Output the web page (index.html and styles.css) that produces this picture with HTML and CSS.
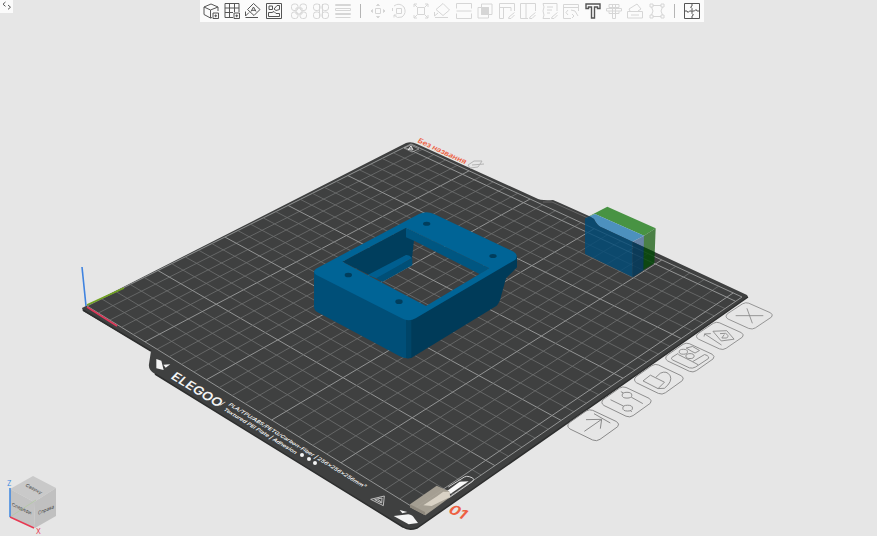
FILE: index.html
```
<!doctype html>
<html lang="ru">
  <head>
    <meta charset="utf-8" />
    <meta name="viewport" content="width=device-width, initial-scale=1" />
    <title>Без названия</title>
    <link rel="stylesheet" href="styles.css">
  </head>
  <body>
    <main class="viewport">
      <svg class="scene" viewBox="0 0 877 536" preserveAspectRatio="xMidYMid slice">
        <defs>
          <path id="plate" d="M82 308L406 143Q411 141 417 144L536 198Q541 201 553 200L560 203L589 216L594 219Q597 226 603 228L747 295L748 297L417 528Q409 531 403 527L155 374Q148 370 149 364L151 351L83 311Z" />
          <clipPath id="plate-clip"><use href="#plate" /></clipPath>
          <path id="tile" d="M-72 -7L-22 -42Q-12 -48 -2 -44L70 -10Q80 -3 73 5L20 43Q10 50 -2 45L-70 12Q-82 4 -72 -7Z" />
        </defs>

        <!-- wipe tower, part above the plate -->
        <svg x="560" y="190" width="200" height="120" viewBox="0 0 600 360">
          <path fill="#489343" d="M75 85L142 50L287 115L252 137L105 72Z" />
          <path fill="#4d91be" d="M75 85L105 72L252 137L218 155L218 262L75 192Z" />
          <path fill="#6783a6" d="M218 155L252 137V240L218 262Z" />
          <path fill="#4b8046" d="M252 137L287 115L283 220L250 240Z" />
        </svg>

        <use href="#plate" fill="#3f4040" />
        <path class="rim" d="M83 310L151 351M155 374L403 527Q409 531 417 528L748 297" />
        <g id="grid"></g>
        <path class="rim-light" d="M543 202H552L588 218" />

        <!-- wipe tower, part in front of the plate -->
        <g clip-path="url(#plate-clip)">
          <svg x="560" y="190" width="200" height="120" viewBox="0 0 600 360">
            <path fill="#004b78" opacity=".8" d="M75 85L105 72L252 137L218 155V262L75 192Z" />
            <path fill="#043a5c" opacity=".86" d="M218 155L252 137V240L218 262Z" />
            <path fill="#06480a" opacity=".86" d="M252 137L287 115L283 220L250 240Z" />
          </svg>
        </g>

        <!-- origin axes -->
        <path class="axis axis-z" d="M86 306L82 267" />
        <path class="axis axis-y" d="M87 305L124 288" />
        <path class="axis axis-x" d="M87 307L117 326" />

        <!-- plate print -->
        <svg x="70" y="255" width="150" height="150" viewBox="0 0 450 450">
          <path fill="#f4f4f4" d="M259 312L274 317L281 345L259 340ZM280 329L301 328L287 338Z" />
        </svg>
        <g class="print">
          <text class="brand" transform="matrix(.85 .52 -.6 .65 170 378)">ELEGOO</text>
          <text class="spec" transform="matrix(.85 .52 -.75 .47 220 404)">|</text>
          <text class="spec" transform="matrix(.85 .52 -.7 .52 228 405)">PLA/TPU/ABS/PETG/Carbon-Fiber | 256×256×256mm³</text>
          <text class="spec" transform="matrix(.85 .52 -.7 .52 223 410)">Textured PEI Plate | Adhesion</text>
          <circle cx="302" cy="455" r="2" />
          <circle cx="309" cy="459" r="2" />
          <circle cx="315" cy="463" r="2" />
        </g>

        <!-- plate corner badge -->
        <path fill="none" stroke="#b5b5b5" stroke-width=".7" d="M404 148L411 145L419 149L412 152Z" />
        <path fill="none" stroke="#f2f2f2" d="M408 150L411 146L413 150M409 149H412" />

        <!-- front corner marks and nozzle wipe area -->
        <svg x="360" y="465" width="125" height="71" viewBox="0 0 375 213">
          <path fill="none" stroke="#bdbdbd" stroke-width="3" stroke-linejoin="round" d="M32 103L73 93L70 122ZM44 104L66 99L65 114ZM53 103L63 110" />
          <path fill="#f4f4f4" d="M101 153L145 148Q158 150 163 160L174 174L146 178ZM119 135L142 141L127 145Z" />
          <path fill="none" stroke="#d0d0d0" stroke-width="3" d="M265 66L313 36Q320 32 328 35L338 39Q344 43 338 49L266 99" />
          <path fill="#fafafa" d="M256 82L299 50L326 49L272 86Z" />
          <path fill="#aaa397" opacity=".95" d="M150 118L230 62L268 79L270 97L196 151L150 127Z" />
          <path fill="#8e887d" d="M150 118L195 141L196 151L150 127Z" />
          <path fill="#d9d2c5" d="M190 121L229 95L250 80L269 81L270 96L215 123Z" />
        </svg>

        <!-- printed part -->
        <svg x="300" y="200" width="230" height="165" viewBox="0 0 690 495">
          <path fill="#003e5d" d="M127 185L318 83L343 112L336 175L320 166L210 226Z" />
          <path fill="#005681" d="M318 83L568 205L540 223L342 122L318 112Z" />
          <path fill="#005e8f" d="M203 225L318 165Q328 164 336 174L232 236Z" />
          <path fill="#004f77" d="M228 235L337 174V196L247 246Z" />
          <path fill="#004f78" d="M42 214L325 358V475Q309 475 298 468L50 335Q42 330 42 322Z" />
          <path fill="#003b59" d="M325 358L651 168V202L637 216L618 235L604 286Q600 307 590 317L347 466Q337 475 325 475Z" />
          <path fill="#004568" d="M318 355H334V472Q325 477 318 474Z" />
          <path fill="#006496" fill-rule="evenodd" d="M48 206L357 42Q379 32 402 42L641 155Q656 165 646 179L347 355Q326 367 305 355L48 224Q36 215 48 206ZM127 185L378 318L568 205L318 83Z" />
          <g fill="#003e5d">
            <ellipse cx="380" cy="71" rx="11" ry="6" />
            <ellipse cx="579" cy="168" rx="11" ry="6" />
            <ellipse cx="145" cy="225" rx="11" ry="7" />
            <ellipse cx="297" cy="305" rx="11" ry="7" />
          </g>
        </svg>

        <!-- plate name and number -->
        <text class="plate-name" transform="matrix(.9 .42 -.5 .75 417 142)">Без названия</text>
        <path fill="none" stroke="#b4b4b4" d="M468 165L474 161H482L478 167L470 168ZM472 165L484 164" />
        <text class="plate-number" transform="matrix(.88 .42 -.6 .68 447 512)">01</text>

        <!-- plate actions -->
        <svg class="plate-actions" x="550" y="295" width="230" height="150" viewBox="0 0 690 450">
          <g transform="translate(598 62) scale(.91 .85)"><use href="#tile" /><path d="M-45 0H46M-8 -26L10 27" /></g>
          <g transform="translate(510 122) scale(.92 .88)"><use href="#tile" /><path d="M-23 -15L22 -17L46 12L4 18ZM0 -7L18 -8Q32 0 22 8L6 8L14 -4M-50 -6L5 32M-52 3L-50 -6L-30 -7" /></g>
          <g transform="translate(420 187) scale(.95 .93)"><use href="#tile" /><path d="M-37 -13L-57 0Q-62 5 -54 9L-2 34Q8 37 18 31L58 4Q62 -1 54 -6L46 -9L8 14L26 24M8 14L-37 -9" /><ellipse cx="-21" cy="-18" rx="13" ry="8" /><ellipse cx="0" cy="-4" rx="13" ry="8" /><path d="M-12 -30L8 -35L30 -22L16 -14L6 -19Z" /></g>
          <g transform="translate(327 252) scale(.96 .96)"><use href="#tile" /><path d="M-50 6L-27 -12L17 10L-3 30ZM-10 -5L4 -18Q24 -28 35 -10Q43 8 17 29L-3 30" /></g>
          <g transform="translate(230 320) scale(.97 .97)"><use href="#tile" /><path d="M-50 -6L-9 14M16 32L10 26M-18 -31L-10 -27M14 -14L50 6" /><ellipse cx="1" cy="-20" rx="15" ry="9" /><ellipse cx="3" cy="20" rx="15" ry="9" /></g>
          <g transform="translate(130 390)"><use href="#tile" /><path d="M-27 19L25 -17M-22 -16L25 -17L21 11M2 -34L51 -6" /></g>
        </svg>

        <!-- view cube -->
        <g class="cube">
          <path fill="#c9c9c9" d="M33 476L56 488L34 502L10 489Z" />
          <path fill="#c3c3c3" d="M10 489L34 502L35 528L10 517Z" />
          <path fill="#c0c0c0" d="M56 488L34 502L35 528L56 516Z" />
          <path stroke="#b6c8aa" d="M10 517L36 500" />
          <path stroke="#3b86e0" stroke-width="1.5" d="M10 488V517" />
          <path stroke="#e73952" stroke-width="1.5" d="M10 517L34 528" />
          <text class="face" transform="matrix(.88 .46 -.6 .7 25 486)">Сверху</text>
          <text class="face" transform="matrix(.9 .4 0 1 12 506)">Спереди</text>
          <text class="face" transform="matrix(.88 -.38 0 1 38 515)">Справа</text>
          <text class="label-z" x="7" y="486">Z</text>
          <text class="label-x" x="36" y="534">X</text>
        </g>
      </svg>

      <button class="collapse" type="button" aria-label="Свернуть панель">
        <svg viewBox="0 0 13 13"><path d="M5.500 2L3 4.200L5.500 6.400M8 5L10.500 7.200L8 9.400" /></svg>
      </button>

      <nav class="toolbar" aria-label="Инструменты">
        <div class="group">
          <button type="button" aria-label="Добавить модель"><svg viewBox="0 0 16 16"><path d="M9 14.500L7.500 15L1 11.500V4L8 1L15 4V8M1 4L7.500 7L15 4M7.500 7V15M10 10H15.500V15.500H10ZM12.700 11.500V14.200M11.400 12.800H14.100" /></svg></button>
          <button type="button" aria-label="Добавить пластину"><svg viewBox="0 0 16 16"><path d="M9 14.500H1V.5H15V9M1 5H15M1 9.500H9M5.500 .5V14.500M10.500 .5V9M10 10H15.500V15.500H10ZM12.700 11.500V14.200M11.400 12.800H14.100" /></svg></button>
          <button type="button" aria-label="Автоориентация"><svg viewBox="0 0 16 16"><path d="M8.500 .5L15 6.500L9 12.500L2.500 6.500ZM6 8.500L8.500 4L11 8.500M7 7.300H10.500M.5 8.500V13L4 9.500M.5 14.500H13" /></svg></button>
          <button type="button" aria-label="Расставить"><svg viewBox="0 0 16 16"><path d="M.5 .5H15.500V15.500H.5ZM3 3H6.500V6.500H3ZM8 6L11 2.500H13.500V6.500L10 7.500ZM2.500 9.500H6L8 8.500L10 10.500H13.500V13.500H2.500Z" /></svg></button>
        </div>
        <div class="group group-wide">
          <button type="button" disabled aria-label="Разделить на объекты"><svg viewBox="0 0 16 16"><rect x=".5" y="1" width="6.500" height="6.500" rx="2.500" /><rect x="9" y="1" width="6.500" height="6.500" rx="2.500" /><rect x=".5" y="9" width="6.500" height="6.500" rx="2.500" /><rect x="9" y="9" width="6.500" height="6.500" rx="2.500" /><path d="M5 5H11V11H5Z" /></svg></button>
          <button type="button" disabled aria-label="Разделить на части"><svg viewBox="0 0 16 16"><rect x=".5" y="1" width="6.500" height="6.500" rx="2.500" /><rect x="9" y="1" width="6.500" height="6.500" rx="2.500" /><rect x=".5" y="9" width="6.500" height="6.500" rx="2.500" /><rect x="9" y="9" width="6.500" height="6.500" rx="2.500" /><path d="M6.500 1V15M9.500 1V15" /></svg></button>
          <button type="button" disabled aria-label="Высота слоёв"><svg viewBox="0 0 16 16"><path d="M.5 1.500H15.500V2.500H.5ZM.5 5.500H15.500V7.500H.5ZM.5 10.500H15.500V11.500H.5ZM.5 14.500H15.500" /></svg></button>
        </div>
        <span class="sep"></span>
        <div class="group group-fill">
          <button type="button" disabled aria-label="Переместить"><svg viewBox="0 0 16 16"><path d="M5.500 5.500H10.500V10.500H5.500ZM6.500 2.500L8 1L9.500 2.500ZM6.500 13.500L8 15L9.500 13.500ZM2.500 6.500L1 8L2.500 9.500ZM13.500 6.500L15 8L13.500 9.500Z" /></svg></button>
          <button type="button" disabled aria-label="Повернуть"><svg viewBox="0 0 16 16"><path d="M5.500 5.500H10.500V10.500H5.500ZM3 3Q8 -1 13 4Q16 10 11 14Q6 16 3 12M3 12V14.500M3 12H5.500M1.500 5V8" /></svg></button>
          <button type="button" disabled aria-label="Масштаб"><svg viewBox="0 0 16 16"><path d="M4.500 4.500H11.500V11.500H4.500ZM1 4V1H4M12 1H15V4M15 12V15H12M4 15H1V12M1 1L4.500 4.500M15 1L11.500 4.500M15 15L11.500 11.500M1 15L4.500 11.500" /></svg></button>
          <button type="button" disabled aria-label="На поверхность"><svg viewBox="0 0 16 16"><path d="M9 .5L15.500 7L9 12.500L2 6.500ZM.5 9V13L4 10M1 14.500H14" /></svg></button>
          <button type="button" disabled aria-label="Разрезать"><svg viewBox="0 0 16 16"><path d="M.5 5.500V.5H15.500V5.500M.5 10.500V15.500H15.500V10.500M.5 8H15.500" /></svg></button>
          <button type="button" disabled aria-label="Булевы операции"><svg viewBox="0 0 16 16"><path d="M1 4.500H11.500V15H1ZM4.500 1H15V11.500H4.500Z" /><path class="solid" d="M4.500 4.500H11.500V11.500H4.500Z" /></svg></button>
          <button type="button" disabled aria-label="Поддержки"><svg viewBox="0 0 16 16"><path d="M.5 15.500V.5H15.500V8M.5 4.500H12M4.500 4.500V15.500H.5M12 4.500V8M15.500 9.500L10 14L9.500 15.500H12L15.500 12" /></svg></button>
          <button type="button" disabled aria-label="Рисование шва"><svg viewBox="0 0 16 16"><path d="M8 15.500H.5V.5H15.500V8M6 .5V15.500M15.500 9.500L10 14L9.500 15.500H12L15.500 12" /></svg></button>
          <button type="button" disabled aria-label="Нечёткая оболочка"><svg viewBox="0 0 16 16"><path d="M8 15.500H1L2 12L1 8L2 4L1 .5H15V8M5 4H11M5 7H10M5 10H8M15.500 9.500L10 14L9.500 15.500H12L15.500 12" /></svg></button>
          <button type="button" disabled aria-label="Раскрашивание"><svg viewBox="0 0 16 16"><path d="M8 15.500H.5V1.500H15.500V8M.5 4.500H15.500M5 7L3 9.500L5 12M8 7L12 8L15 13M9 11L11 13L9 15" /></svg></button>
          <button type="button" aria-label="Текст"><svg viewBox="0 0 16 16"><path class="bold" d="M1 1H15V5.500H12.500V4H9.500V15H6.500V4H3.500V5.500H1Z" /></svg></button>
          <button type="button" disabled aria-label="Эмблема"><svg viewBox="0 0 16 16"><path d="M3 1.500H13V4.500H3ZM.5 5.500H15.500V8H.5ZM3 8.500V10.500H13V8.500M6.500 2V15.500H9.500V2" /></svg></button>
          <button type="button" disabled aria-label="Измерить"><svg viewBox="0 0 16 16"><path d="M.5 8.500H15.500V15H.5ZM3 8L2 6L10 1L14 6L11 8M4 12H12" /></svg></button>
          <button type="button" disabled aria-label="Сборка"><svg viewBox="0 0 16 16"><path d="M1 1H4V4H1ZM12 1H15V4H12ZM12 12H15V15H12ZM1 12H4V15H1ZM4 2.500H12M4 13.500H12M2.500 4L4 8L2.500 12M13.500 4L12 8L13.500 12" /></svg></button>
        </div>
        <span class="sep"></span>
        <button type="button" aria-label="Вид сборки"><svg viewBox="0 0 16 16"><path d="M.5 .5H15.500V15.500H.5ZM8 .5V3L6.500 4L8 5.500V7.500M.5 8H3L4 9.500L5.500 8H10.500L12 6.500L13 8H15.500M8 8V10.500L9.500 12L8 13V15.500" /></svg></button>
      </nav>
    </main>

    <script src="scene.js"></script>
  </body>
</html>
```
FILE: styles.css
```
:root { --bg:#e6e6e6; --bar:#fbfbfb; --ink:#555; --off:#d6d6d6; --orange:#ed6142; }
*{ box-sizing:border-box; }
body{ margin:0; background: var(--bg); font-family: Inter, "Liberation Sans", Arial, sans-serif; }
.viewport{ display:grid; grid-template-columns: 100%; height: 100vh; overflow:hidden; }
.scene{ grid-area: 1 / 1; width:100%; height:100vh; display:block; }

button{ padding:0; border:0; background:none; color: var(--ink); width:16px; height:16px; cursor:pointer; }
button:disabled{ color: var(--off); cursor:default; }
button svg{ display:block; width:100%; height:100%; fill:none; stroke:currentColor; stroke-width:1; }
button .solid{ fill:currentColor; }
button .bold{ stroke-width:1.4; }

.collapse{ grid-area: 1 / 1; z-index:1; width:13px; height:13px; background: var(--bar); }
.toolbar{ grid-area: 1 / 1; z-index:1; justify-self:center; display:flex; align-items:center; gap:9px; width:504px; max-width:100%; height:22px; padding: 0 4px 0 3px; margin-left:27px; background: var(--bar); }
.group{ display:flex; gap:5px; }
.group-wide{ gap:6px; }
.group-fill{ flex:1; gap:0; justify-content:space-between; }
.sep{ width:1px; height:14px; background:#b5b5b5; }

.grid-line{ stroke:#6f7070; stroke-width:.8; }
.grid-line.major{ stroke:#939494; stroke-width:1; }
.rim{ fill:none; stroke:#2d2e2e; stroke-width:1.5; }
.rim-light{ fill:none; stroke:#777; stroke-width:.7; }
.axis{ stroke-width:1.6; }
.axis-x{ stroke:#e0395a; }
.axis-y{ stroke:#72a322; }
.axis-z{ stroke:#3f83e0; }

.print{ fill:#f4f4f4; }
.brand{ font-size:14px; font-weight:600; }
.spec{ font-size:6px; font-weight:600; }
.plate-name{ font-size:8px; font-weight:600; fill: var(--orange); }
.plate-number{ font-size:16px; font-weight:700; fill: var(--orange); }
.plate-actions{ fill:none; stroke:#8a8a8a; stroke-width:3; stroke-linejoin:round; }

.cube{ fill:none; }
.face{ font-size:5px; fill:#444; }
.label-z, .label-x{ font-size:7px; }
.label-z{ fill:#3b86e0; }
.label-x{ fill:#e73952; }
```
FILE: scene.js
```
const SIZE = 256;
const STEP = 10;
const NS = "http://www.w3.org/2000/svg";
const grid = document.getElementById("grid");

// screen corners of the bed: origin, +x, +x+y, +y
const [p0, p1, p2, p3] = [[87, 306], [424, 514], [742, 297], [411, 144]];

const dx1 = p1[0] - p2[0], dx2 = p3[0] - p2[0], dx3 = p0[0] - p1[0] + p2[0] - p3[0];
const dy1 = p1[1] - p2[1], dy2 = p3[1] - p2[1], dy3 = p0[1] - p1[1] + p2[1] - p3[1];
const det = dx1 * dy2 - dx2 * dy1;
const g = (dx3 * dy2 - dx2 * dy3) / det;
const h = (dx1 * dy3 - dx3 * dy1) / det;

function project(x, y) {
  const u = x / SIZE, v = y / SIZE;
  const w = g * u + h * v + 1;
  return [0, 1].map(i =>
    ((p1[i] - p0[i] + g * p1[i]) * u + (p3[i] - p0[i] + h * p3[i]) * v + p0[i]) / w
  );
}

function addLine(a, b, major) {
  const line = document.createElementNS(NS, "line");
  line.setAttribute("x1", a[0]);
  line.setAttribute("y1", a[1]);
  line.setAttribute("x2", b[0]);
  line.setAttribute("y2", b[1]);
  line.setAttribute("class", major ? "grid-line major" : "grid-line");
  grid.appendChild(line);
}

for (let t = 0; t <= SIZE; t += STEP) {
  const major = t % 50 === 0;
  addLine(project(t, 0), project(t, SIZE), major);
  addLine(project(0, t), project(SIZE, t), major);
}
addLine(project(SIZE, 0), project(SIZE, SIZE), true);
addLine(project(0, SIZE), project(SIZE, SIZE), true);
```
